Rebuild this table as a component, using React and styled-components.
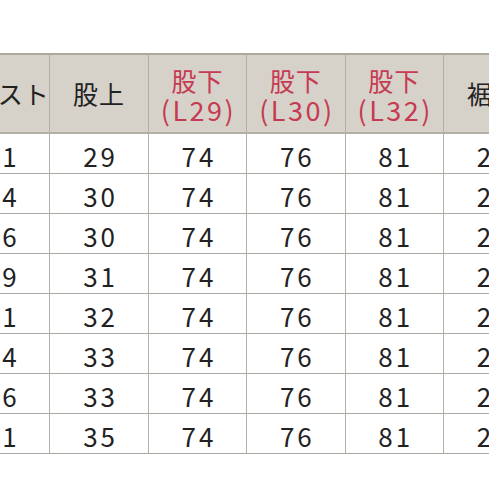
import React from "react";
import styled, { createGlobalStyle } from "styled-components";

const Global = createGlobalStyle`
  html, body { margin: 0; padding: 0; background: #ffffff; }
  body { font-family: "Noto Sans CJK JP", "Noto Sans", sans-serif; }
`;

const Page = styled.div`
  width: 489px;
  height: 489px;
  overflow: hidden;
  padding-top: 53px;
  box-sizing: border-box;
`;

const Grid = styled.div`
  display: grid;
  grid-template-columns: repeat(6, 98.4px);
  margin-left: -48px;
  width: max-content;
  border-top: 2px solid #aca79f;
`;

const HeadCell = styled.div`
  height: 79px;
  box-sizing: border-box;
  background: #d6d1c9;
  border-right: 1px solid #b3aea6;
  border-bottom: 2px solid #b3aea6;
  display: flex;
  flex-direction: column;
  align-items: center;
  justify-content: center;
  color: ${(p) => (p.$red ? "#c63a52" : "#222222")};
  font-size: 25px;
  line-height: 29px;
  letter-spacing: 1px;
  white-space: nowrap;
  padding-top: ${(p) => (p.$red ? "3px" : "0")};
  padding-right: ${(p) => (p.$first ? "6px" : "0")};
`;

const SubLine = styled.span`
  font-size: 27px;
  letter-spacing: 2.5px;
  padding-left: 2px;
`;

const Cell = styled.div`
  height: 40px;
  box-sizing: border-box;
  border-right: 1px solid #b3aea6;
  border-bottom: 1px solid #aaa6a0;
  display: flex;
  align-items: center;
  justify-content: center;
  color: #222222;
  font-size: 26px;
  letter-spacing: 3px;
  padding-left: 3px;
  padding-top: 3px;
`;

const headers = [
  { lines: ["ウエスト"], first: true },
  { lines: ["股上"] },
  { lines: ["股下", "(L29)"], red: true },
  { lines: ["股下", "(L30)"], red: true },
  { lines: ["股下", "(L32)"], red: true },
  { lines: ["裾幅"] },
];

const rows = [
  ["61", "29", "74", "76", "81", "21"],
  ["64", "30", "74", "76", "81", "22"],
  ["66", "30", "74", "76", "81", "22"],
  ["69", "31", "74", "76", "81", "23"],
  ["71", "32", "74", "76", "81", "23"],
  ["74", "33", "74", "76", "81", "24"],
  ["76", "33", "74", "76", "81", "24"],
  ["81", "35", "74", "76", "81", "25"],
];

export default function App() {
  return (
    <>
      <Global />
      <Page>
        <Grid>
          {headers.map((h, i) => (
            <HeadCell key={i} $red={h.red} $first={h.first}>
              {h.lines.map((l, j) =>
                j === 1 ? <SubLine key={j}>{l}</SubLine> : <span key={j}>{l}</span>
              )}
            </HeadCell>
          ))}
          {rows.map((r, i) =>
            r.map((v, j) => <Cell key={i + "-" + j}>{v}</Cell>)
          )}
        </Grid>
      </Page>
    </>
  );
}
